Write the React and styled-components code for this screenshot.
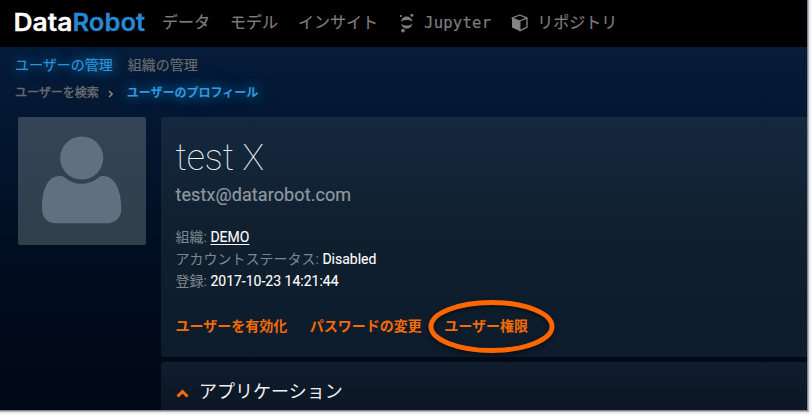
import React from "react";
import styled, { createGlobalStyle } from "styled-components";

const Global = createGlobalStyle`
  * { box-sizing: border-box; }
  body { margin: 0; background: #fff; overflow: hidden; }
`;

const Page = styled.div`
  width: 812px;
  height: 415px;
  overflow: hidden;
  background: #fff;
  font-family: Roboto, "Noto Sans CJK JP", sans-serif;
`;

const Frame = styled.div`
  width: 807px;
  height: 410px;
  display: flex;
  flex-direction: column;
  background: linear-gradient(#061c39 47px, #03152e 150px, #010d20 260px, #000815 410px);
  box-shadow: 0 0 0 1px #7d8490, 0 0 0 2px #b4b6bb, 0 0 3px 3px #ddd;
`;

const TopBar = styled.header`
  height: 47px;
  flex: none;
  display: flex;
  align-items: center;
  padding: 0 0 1px 15px;
  background: #000;
`;

const Logo = styled.svg`
  display: block;
  flex: none;
  width: 134px;
  height: 30px;
  margin-right: 13px;
  font-family: Inter, sans-serif;
  font-size: 24.5px;
  font-weight: 600;
`;

const NavItem = styled.a`
  display: flex;
  align-items: center;
  height: 24px;
  margin-right: ${(p) => p.$gap}px;
  color: #7d7d7d;
  font-size: 16px;
  line-height: 24px;
  white-space: nowrap;
  -webkit-text-stroke: 0.2px;
`;

const NavIcon = styled.svg`
  display: block;
  flex: none;
  margin-right: ${(p) => p.$gap}px;
`;

const Mono = styled.span`
  font-family: "DejaVu Sans Mono", monospace;
  font-size: 15.5px;
  letter-spacing: 0.27px;
`;

const SubNav = styled.nav`
  display: flex;
  gap: 15px;
  height: 36px;
  flex: none;
  padding-left: 15px;
  font-size: 14px;
  line-height: 36px;
`;

const Tab = styled.a`
  color: ${(p) => (p.$active ? "#3094dc" : "#6a6d70")};
  text-shadow: ${(p) => (p.$active ? "0 0 12px #1478b4, 0 0 16px #0f5a8c" : "none")};
  -webkit-text-stroke: 0.15px;
`;

const Crumbs = styled.nav`
  display: flex;
  align-items: center;
  height: 34px;
  flex: none;
  padding: 0 0 15px 15px;
  font-size: 12px;
  line-height: 18px;
`;

const Crumb = styled.span`
  font-weight: ${(p) => (p.$active ? 700 : 400)};
  color: ${(p) => (p.$active ? "#3399e0" : "#666a6e")};
  text-shadow: ${(p) => (p.$active ? "0 0 12px #1478b4, 0 0 16px #0f5a8c" : "none")};
  -webkit-text-stroke: ${(p) => (p.$active ? "0" : "0.45px")};
`;

const CrumbArrow = styled.svg`
  display: block;
  margin: 2px 13px 0 9px;
`;

const Body = styled.main`
  display: flex;
  gap: 15px;
  flex: 1;
  min-height: 0;
  padding-left: 18px;
`;

const Avatar = styled.div`
  width: 128px;
  height: 128px;
  flex: none;
  border-radius: 2px;
  background: linear-gradient(#344456, #313e4b);
  overflow: hidden;
`;

const Panels = styled.div`
  flex: 1;
  display: flex;
  flex-direction: column;
  gap: 5px;
`;

const Profile = styled.section`
  height: 240px;
  flex: none;
  padding: 20px 15px 0 14.5px;
  border-radius: 3px 0 0 3px;
  background: linear-gradient(#14283f, #10202f 45%, #0d1b2b);
`;

const Name = styled.h1`
  margin: 0;
  height: 44px;
  color: #f1f3f5;
  font-size: 36px;
  font-weight: 100;
  line-height: 42px;
  letter-spacing: -0.1px;
`;

const Email = styled.div`
  height: 27px;
  color: #8f979f;
  font-size: 18px;
  line-height: 27px;
  letter-spacing: 0.09px;
  -webkit-text-stroke: 0.2px;
`;

const Details = styled.dl`
  margin: 18px 0 0;
`;

const Detail = styled.div`
  display: flex;
  gap: 3.5px;
  height: 22px;
  font-size: 14px;
  line-height: 22px;
`;

const Term = styled.dt`
  color: #7e8891;
`;

const Value = styled.dd`
  margin: 0;
  color: #fff;
  -webkit-text-stroke: 0.1px;
  text-decoration: ${(p) => (p.$link ? "underline" : "none")};
  text-decoration-thickness: 1px;
  text-underline-offset: 2px;
`;

const Actions = styled.div`
  display: flex;
  gap: 22.5px;
  margin-top: 23px;
  font-size: 14px;
  font-weight: 700;
  line-height: 22px;
`;

const Action = styled.a`
  position: relative;
  color: #f56b05;
  white-space: nowrap;
`;

const Ring = styled.svg`
  position: absolute;
  left: -18.5px;
  top: -17.5px;
  overflow: visible;
  filter: drop-shadow(0 2px 2px rgba(0, 0, 0, 0.5));
`;

const Section = styled.section`
  flex: 1;
  display: flex;
  align-items: center;
  padding: 11px 15px 0;
  border-radius: 3px 0 0 0;
  background: linear-gradient(#0f1d2d, #0c1624);
`;

const Caret = styled.svg`
  display: block;
  margin: 4px 10px 0 0;
`;

const SectionTitle = styled.h2`
  margin: 0;
  color: #eef0f2;
  font-size: 18px;
  font-weight: 400;
  line-height: 24px;
`;

export default function App() {
  return (
    <Page>
      <Global />
      <Frame>
        <TopBar>
          <Logo viewBox="0 0 134 30">
            <text x="-1.500" y="23" fill="#fff" stroke="#fff" strokeWidth="0.300" textLength="59" lengthAdjust="spacingAndGlyphs">Data</text>
            <text x="57.500" y="23" fill="#258ad3" stroke="#258ad3" strokeWidth="0.300" textLength="72.500" lengthAdjust="spacingAndGlyphs">Robot</text>
          </Logo>
          <NavItem $gap={20}>データ</NavItem>
          <NavItem $gap={20}>モデル</NavItem>
          <NavItem $gap={21}>インサイト</NavItem>
          <NavItem $gap={20}>
            <NavIcon $gap={10} width="15" height="20" viewBox="0 0 15 20" fill="currentColor">
              <path d="M2 8.700C2.800 5 5 3.600 7.700 3.600s4.900 1.400 5.800 5.100C12 7.400 10 6.900 7.700 6.900S3.500 7.400 2 8.700Z" />
              <path d="M2 10.600c.9 3.700 3.100 5.100 5.700 5.100s4.900-1.400 5.800-5.100c-1.500 1.400-3.500 2-5.800 2s-4.200-.6-5.700-2Z" />
              <circle cx="1.900" cy="3" r="1.100" />
              <circle cx="12.900" cy="2.200" r="1.500" />
              <circle cx="4" cy="17.600" r="1.900" />
            </NavIcon>
            <Mono>Jupyter</Mono>
          </NavItem>
          <NavItem $gap={0}>
            <NavIcon $gap={9} width="17" height="18" viewBox="0 0 17 18">
              <path d="M1 4.200 8.800 7v9.900L1 13.400Z" fill="#858585" />
              <path d="M1 4.100 8.700 1 16 3.900v9.300l-7.200 3.600V7Z M1 4.100 8.800 7 16 3.900" fill="none" stroke="#858585" strokeWidth="1.300" strokeLinejoin="round" />
            </NavIcon>
            リポジトリ
          </NavItem>
        </TopBar>
        <SubNav>
          <Tab $active>ユーザーの管理</Tab>
          <Tab>組織の管理</Tab>
        </SubNav>
        <Crumbs>
          <Crumb>ユーザーを検索</Crumb>
          <CrumbArrow width="6" height="8" viewBox="0 0 6 8" fill="none" stroke="#8b9096" strokeWidth="1.400">
            <path d="m1 1 3.200 3L1 7" />
          </CrumbArrow>
          <Crumb $active>ユーザーのプロフィール</Crumb>
        </Crumbs>
        <Body>
          <Avatar>
            <svg width="128" height="128" viewBox="0 0 128 128" fill="#61707e">
              <circle cx="63.700" cy="41" r="21.600" />
              <path d="M41.500 59C31 59 24 70 24 92c0 9 6 14.300 14 14.300h51c8 0 14.300-5.300 14.300-14.300C103.300 70 95 59 85.500 59c-2 0-3.500.4-4.700 1.400C70 69 57 69 46.500 60.400 45 59.400 43.500 59 41.500 59Z" />
            </svg>
          </Avatar>
          <Panels>
            <Profile>
              <Name>test X</Name>
              <Email>testx@datarobot.com</Email>
              <Details>
                <Detail><Term>組織:</Term><Value $link>DEMO</Value></Detail>
                <Detail><Term>アカウントステータス:</Term><Value>Disabled</Value></Detail>
                <Detail><Term>登録:</Term><Value>2017-10-23 14:21:44</Value></Detail>
              </Details>
              <Actions>
                <Action>ユーザーを有効化</Action>
                <Action>パスワードの変更</Action>
                <Action>
                  ユーザー権限
                  <Ring width="130" height="56" viewBox="0 0 130 56" fill="none">
                    <ellipse cx="65.500" cy="28.500" rx="60.500" ry="24" stroke="#ff6500" strokeWidth="5" />
                  </Ring>
                </Action>
              </Actions>
            </Profile>
            <Section>
              <Caret width="13" height="9" viewBox="0 0 13 9" fill="none" stroke="#ff6a0a" strokeWidth="3">
                <path d="m1.500 7.500 5-5 5 5" />
              </Caret>
              <SectionTitle>アプリケーション</SectionTitle>
            </Section>
          </Panels>
        </Body>
      </Frame>
    </Page>
  );
}
